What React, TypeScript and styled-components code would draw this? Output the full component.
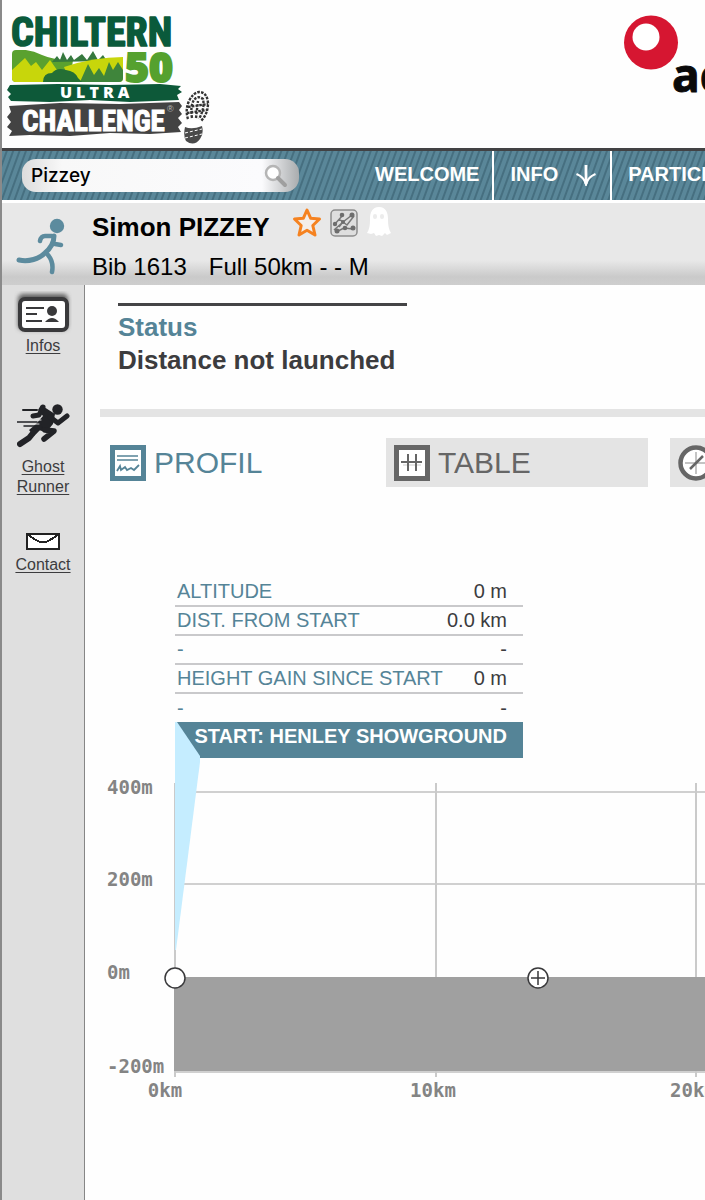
import React from "react";
import styled, { createGlobalStyle } from "styled-components";

const teal = "#558497";
const ink = "#3c3c3e";

const GlobalStyle = createGlobalStyle`
  *, *::before, *::after { box-sizing: border-box; }
  html, body { margin: 0; background: #fefefe; overflow-x: hidden; }
  body { font-family: "Liberation Sans", Arial, sans-serif; color: ${ink}; }
`;

const Page = styled.div`
  display: flex;
  flex-direction: column;
  min-height: 100vh;
  border-left: 2px solid #8a8a8a;
  overflow: hidden;
`;

const Header = styled.header`
  display: flex;
  height: 151px;
  padding: 4px 0 0 4px;
  gap: 410px;
  border-bottom: 3px solid #424244;
  svg { flex: none; display: block; }
`;

const NavBar = styled.nav`
  display: flex;
  align-items: stretch;
  height: 52px;
  padding-left: 20px;
  border-bottom: 3px solid #fff;
  background: repeating-linear-gradient(110deg, #5a8799 0 3px, #466f80 4px 5px, #5a8799 6px);
`;

const Search = styled.form`
  display: flex;
  flex: none;
  align-items: center;
  align-self: center;
  width: 277px;
  height: 33px;
  margin-right: 60px;
  padding: 0 11px 0 9px;
  border-radius: 14px;
  background: linear-gradient(90deg, #dcdcdc 0, #f8f8f8 40px, #fbfbfd 240px, #a9acae 100%);
`;

const SearchInput = styled.input`
  flex: 1;
  min-width: 0;
  padding: 0;
  border: 0;
  outline: 0;
  background: transparent;
  color: #000;
  font: 500 19px Inter, sans-serif;
`;

const PlainButton = styled.button`
  display: block;
  flex: none;
  padding: 0;
  border: 0;
  background: none;
  cursor: pointer;
  svg { display: block; }
`;

const NavLink = styled.a`
  display: flex;
  flex: none;
  align-items: center;
  gap: 17px;
  padding: 0 13px 2px 16px;
  border-right: 2px solid #fff;
  color: #fff;
  font-size: 20px;
  font-weight: 700;
  text-decoration: none;
`;

const Summary = styled.section`
  display: flex;
  height: 82px;
  padding-left: 14px;
  background: linear-gradient(#e8e8e8 0 70%, #cacaca 90%, #cecece);
  color: #000;
`;

const RunnerBadge = styled.div`
  flex: none;
  width: 76px;
  padding-top: 14px;
`;

const NameRow = styled.div`
  display: flex;
  align-items: center;
  height: 40px;
  gap: 8px;
`;

const Name = styled.h1`
  margin: 0 14px 0 0;
  padding-top: 8px;
  font-size: 26px;
  line-height: 30px;
`;

const BibRow = styled.div`
  display: flex;
  gap: 22px;
  padding-top: 10px;
  font-size: 24px;
  line-height: 28px;
`;

const Body = styled.div`
  display: flex;
  flex: 1;
`;

const Sidebar = styled.aside`
  display: flex;
  flex: none;
  flex-direction: column;
  align-items: center;
  width: 83px;
  padding-top: 6px;
  border-right: 1px solid #868686;
  background: #dfdfdf;
`;

const SideLink = styled.a<{ $after?: number }>`
  display: flex;
  flex-direction: column;
  align-items: center;
  margin-bottom: ${(p) => p.$after ?? 0}px;
  color: ${ink};
  font-size: 16px;
  line-height: 20px;
  text-align: center;
  text-underline-offset: 2px;
`;

const SideIcon = styled.span<{ $gap?: number }>`
  display: block;
  margin-bottom: ${(p) => p.$gap ?? 0}px;
  svg { display: block; }
`;

const Main = styled.main`
  flex: 1;
  min-width: 0;
  padding-top: 18px;
`;

const Status = styled.section`
  width: 289px;
  margin-left: 33px;
  padding-top: 5px;
  border-top: 3px solid #444446;
  font-size: 26px;
  font-weight: 700;
  line-height: 33px;
`;

const StatusTitle = styled.h2`
  margin: 0;
  color: ${teal};
  font: inherit;
`;

const StatusText = styled.p`
  margin: 0;
  white-space: nowrap;
`;

const Divider = styled.hr`
  height: 8px;
  margin: 32px 0 21px 15px;
  border: 0;
  background: #e4e4e4;
`;

const Tabs = styled.div`
  display: flex;
  gap: 22px;
  padding-left: 17px;
`;

const Tab = styled.button<{ $active?: boolean }>`
  display: flex;
  flex: none;
  align-items: center;
  gap: 8px;
  width: 262px;
  height: 49px;
  padding: 0 8px;
  border: 0;
  background: ${(p) => (p.$active ? "transparent" : "#e4e4e4")};
  color: ${(p) => (p.$active ? teal : "#666")};
  font: 30px "Liberation Sans", Arial, sans-serif;
  cursor: pointer;
  svg { flex: none; }
`;

const Profile = styled.section`
  position: relative;
  padding-top: 90px;
`;

const Callout = styled.div`
  width: 348px;
  margin-left: 90px;
`;

const Facts = styled.table`
  width: 100%;
  border-collapse: collapse;
  font-size: 20px;
  line-height: 27px;
  tr + tr { border-top: 2px solid #c9c9cb; }
  th, td { height: 29px; padding: 0; white-space: nowrap; }
  th { padding-left: 2px; color: ${teal}; font-weight: 400; text-align: left; }
  td { padding-right: 16px; text-align: right; }
`;

const Place = styled.h3`
  height: 36px;
  margin: 0;
  padding: 0 16px 0 0;
  background: ${teal};
  color: #fff;
  font-size: 20px;
  line-height: 28px;
  text-align: right;
  white-space: nowrap;
`;

const Pointer = styled.svg`
  position: absolute;
  top: 235px;
  left: 90px;
  z-index: 1;
  pointer-events: none;
`;

const Chart = styled.svg`
  display: block;
  width: 100%;
  height: 350px;
  text {
    fill: #848484;
    font: 700 19px "DejaVu Sans Mono", monospace;
  }
`;

function EventLogo() {
  return (
    <svg width="208" height="142" viewBox="6 4 208 142" role="img" aria-label="Chiltern 50 Ultra Challenge">
      <text x="11" y="46" fill="#0a5a3b" stroke="#0a5a3b" strokeWidth="1.5" strokeLinejoin="round" fontFamily='"Roboto Condensed", "Liberation Sans Narrow", "Liberation Sans", sans-serif' fontWeight="700" fontSize="40">CHILTERN</text>
      <clipPath id="hills"><rect x="12" y="50" width="111" height="32" rx="4" /></clipPath>
      <g clipPath="url(#hills)">
        <path d="M12 50Q28 48 42 55Q56 61 73 60L72 67 40 82H12z" fill="#5aa12f" />
        <path d="M52 62L57 56 60 60 63 52 67 60 71 55 74 60 82 54 87 60 93 51 98 60 103 55 107 61z" fill="#35783e" />
        <path d="M64 67Q94 57 123 57V82H70z" fill="#c8d60b" />
        <path d="M12 70L25 58 31 66 36 62 42 70 50 60 57 70 72 71 78 82H12z" fill="#c8d60b" />
        <path d="M80 82L88 64 94 75 99 68 104 76 109 62 113 70 118 62 123 70V82z" fill="#3f853b" />
        <path d="M43 82Q43 73 52 73Q57 67 66 70Q75 71 78 78L82 82z" fill="#246f35" />
      </g>
      <text x="125" y="82" fill="#55a12e" stroke="#55a12e" strokeWidth="2" fontFamily='"Open Sans", "Liberation Sans", sans-serif' fontWeight="800" fontSize="41">50</text>
      <path d="M10 85L58 84 110 85 160 84 181 86 178 89 182 92 177 95 179 100 130 102 90 100 50 102 11 101 8 97 11 94 7 90z" fill="#0d5939" />
      <text x="60" y="98" fill="#fff" fontFamily='"Open Sans", sans-serif' fontWeight="800" fontSize="16" letterSpacing="4">ULTRA</text>
      <path d="M9 106L60 103 120 104 179 102 182 106 179 110 182 114 178 118 182 123 178 127 181 132 150 134 110 133 70 136 30 135 9 136 12 131 7 127 11 122 7 117 11 112z" fill="#434343" />
      <text x="22" y="131" fill="#fff" stroke="#fff" strokeWidth="1" fontFamily='"Roboto Condensed", "Liberation Sans Narrow", "Liberation Sans", sans-serif' fontWeight="700" fontSize="29">CHALLENGE</text>
      <text x="167" y="112" fill="#bbb" fontSize="9">®</text>
      <g fill="none" stroke="#333" strokeWidth="2.4" strokeDasharray="2.6 1.2">
        <path d="M188 119Q185 110 189 101Q193 93 199 92Q207 92 208 103Q208 114 201 121" />
        <path d="M192 118Q190 106 194 100Q198 95 203 99Q205 108 199 119" />
        <path d="M196 118L198 101M187 113L207 110M188 107L208 104" />
      </g>
      <path d="M185 127Q192 130 202 126Q204 134 200 139Q194 147 186 141Q183 136 185 127z" fill="#4a4a4a" />
      <path d="M185 133L202 129M185 138L202 134" stroke="#fff" strokeDasharray="3 2" />
    </svg>
  );
}

function SponsorLogo() {
  return (
    <svg width="140" height="110" viewBox="624 4 140 110" role="img" aria-label="Sponsor">
      <circle cx="651" cy="42.500" r="27" fill="#d61631" />
      <circle cx="646" cy="37" r="13.500" fill="#fff" />
      <text x="672" y="92" fill="#0a0a0a" stroke="#0a0a0a" strokeWidth="1" fontFamily='"Open Sans", sans-serif' fontWeight="700" fontSize="46">ac</text>
    </svg>
  );
}

function SearchIcon() {
  return (
    <svg width="24" height="24" viewBox="0 0 24 24" fill="none">
      <circle cx="9" cy="9" r="7" fill="#fff" stroke="#b5b5b5" strokeWidth="2.500" />
      <path d="M14 14L21 21" stroke="#9f9f9f" strokeWidth="4" strokeLinecap="round" />
    </svg>
  );
}

function ArrowDown() {
  return (
    <svg width="22" height="22" viewBox="0 0 22 22" fill="none" stroke="#fff">
      <path d="M11 1V20" strokeWidth="2.800" />
      <path d="M1.500 10Q9 13 11 20Q13 13 20.500 10" strokeWidth="2.400" />
    </svg>
  );
}

function TealRunner() {
  return (
    <svg width="50" height="60" viewBox="0 0 50 60" fill="none" stroke="#5c8b9e" strokeWidth="5" strokeLinecap="round">
      <circle cx="41" cy="9" r="7.200" fill="#5c8b9e" stroke="none" />
      <path d="M3 43C13 45 23 42 29 36C36 30 38 25 38 19" />
      <path d="M36 19H29Q25 19 24 24M39 27L45 28M32 38Q38 45 36 55" strokeWidth="4.500" />
    </svg>
  );
}

function StarIcon() {
  return (
    <svg width="30" height="30" viewBox="0 0 30 30">
      <path d="M15 2L18.600 10.200 27.500 11 20.800 17.500 23 27 15 22.300 7 27 9.200 17.500 2.500 11 11.400 10.200z" fill="#f4eeea" stroke="#f58220" strokeWidth="3" strokeLinejoin="round" />
    </svg>
  );
}

function ShareIcon() {
  return (
    <svg width="28" height="28" viewBox="0 0 28 28" stroke="#777" strokeWidth="1.500">
      <rect x="1" y="1" width="26" height="26" rx="4" fill="#dedede" stroke="#8d8d8d" />
      <path d="M4 16L13 6M4 21L13 13 22 6M6 23L14 19 23 20M13 13L17 16 24 7M9 10L13 13 9 18" fill="none" />
      <g fill="#6d6d6d" stroke="none">
        <circle cx="12" cy="6" r="2.300" /><circle cx="22" cy="6" r="2.500" /><circle cx="5" cy="15" r="2.200" />
        <circle cx="13" cy="13" r="2" /><circle cx="7" cy="22" r="2.500" /><circle cx="15" cy="19" r="2.300" /><circle cx="23" cy="19" r="2.500" />
      </g>
    </svg>
  );
}

function GhostIcon() {
  return (
    <svg width="26" height="32" viewBox="0 0 26 32">
      <path d="M13 0C6 0 4 6 4 12C4 19 3 23 1 26L5 27 8 26 10 29 13 28 16 29 19 26 21 28 25 26C23 23 22 19 22 12C22 6 20 0 13 0z" fill="#fff" />
      <path d="M9 9V10M16 9V10" stroke="#ececec" strokeWidth="4" strokeLinecap="round" />
    </svg>
  );
}

function CardIcon() {
  return (
    <svg width="58" height="46" viewBox="0 0 58 46">
      <defs>
        <filter id="soft" x="-20%" y="-20%" width="140%" height="140%"><feGaussianBlur stdDeviation="2" /></filter>
      </defs>
      <rect x="4" y="3" width="50" height="36" rx="5" fill="#5f5f5f" filter="url(#soft)" />
      <rect x="6" y="8" width="47" height="31" rx="5" fill="#fff" stroke="#39393b" strokeWidth="4" />
      <path d="M12 17H30M12 23H23M12 30H28" stroke="#39393b" strokeWidth="2" />
      <circle cx="38" cy="20" r="5" fill="#39393b" />
      <path d="M31 31Q38 23 45 31z" fill="#39393b" />
    </svg>
  );
}

function SprinterIcon() {
  return (
    <svg width="53" height="44" viewBox="0 0 53 44" fill="none" stroke="#222327" strokeLinecap="round" strokeLinejoin="round">
      <circle cx="40.500" cy="5.500" r="5.200" fill="#222327" stroke="none" />
      <path d="M24 1L38 10 36 20 31 26 39 26 36 31 22 26 17 32 12 26 19 20 26 12 21 6z" fill="#222327" stroke="none" />
      <path d="M33 13L41 19 50 12" strokeWidth="5" />
      <path d="M26 3L22 11 16 12" strokeWidth="5" />
      <path d="M22 23L16 29 12 34 3 40" strokeWidth="6" />
      <path d="M28 26L37 27 27 35" strokeWidth="5.500" />
      <path d="M6 6H20" strokeWidth="2" />
      <path d="M0 18L20 18M7 22H20" strokeWidth="1.500" />
      <path d="M12 16H24M14 20H22" stroke="#dfdfdf" strokeWidth="1" />
    </svg>
  );
}

function EnvelopeIcon() {
  return (
    <svg width="34" height="17" viewBox="0 0 34 17" shapeRendering="crispEdges">
      <rect x="1" y="1" width="32" height="15" fill="#fff" stroke="#222" strokeWidth="1.500" />
      <path d="M2 2L10 7 14 9H20L24 7 32 2" fill="none" stroke="#222" strokeWidth="2" />
    </svg>
  );
}

function ProfileIcon() {
  return (
    <svg width="36" height="36" viewBox="0 0 36 36" fill="none" stroke="#558497">
      <rect x="2.500" y="2.500" width="31" height="31" fill="#fff" strokeWidth="5" />
      <path d="M7 11H28M7 15H28" strokeWidth="1.500" />
      <path d="M7 26L10 21 11 25 15 22 17 25 21 23 24 25 29 20" strokeWidth="1.800" />
    </svg>
  );
}

function TableIcon() {
  return (
    <svg width="36" height="36" viewBox="0 0 36 36" fill="none" stroke="#666">
      <rect x="2.500" y="2.500" width="31" height="31" fill="#fff" strokeWidth="5" />
      <path d="M9 20H27" stroke="#ccc" strokeWidth="1" />
      <path d="M14 9V26M22 9V26M7 17H28" strokeWidth="2" />
    </svg>
  );
}

function CompassIcon() {
  return (
    <svg width="36" height="36" viewBox="0 0 36 36" fill="none" stroke="#666">
      <circle cx="18" cy="18" r="15.500" fill="#fff" strokeWidth="4.500" />
      <path d="M18 7V29M7 18H29" stroke="#c4c4c4" strokeWidth="2" />
      <path d="M12 24L25 11" strokeWidth="2.500" />
    </svg>
  );
}

const facts = [
  ["ALTITUDE", "0 m"],
  ["DIST. FROM START", "0.0 km"],
  ["-", "-"],
  ["HEIGHT GAIN SINCE START", "0 m"],
  ["-", "-"],
];

const heights = [
  { label: "400m", line: 34, text: 36 },
  { label: "200m", line: 126, text: 128 },
  { label: "0m", line: 220, text: 221 },
  { label: "-200m", line: 314, text: 315 },
];

const kilometres = [0, 10, 20, 30, 40, 50];
const kmX = (km: number) => 90 + km * 26 + (km ? 1 : 0);

function ElevationChart() {
  return (
    <Chart role="img" aria-label="Elevation profile">
      {heights.map((h) => (
        <g key={h.label}>
          <line x1="89" x2="100%" y1={h.line} y2={h.line} stroke="#d0d0d0" strokeWidth="2" />
          <text x="22" y={h.text}>{h.label}</text>
        </g>
      ))}
      {kilometres.map((km) => (
        <g key={km}>
          <line x1={kmX(km)} x2={kmX(km)} y1="25" y2="319" stroke="#cacaca" strokeWidth="2" />
          <text x={kmX(km) - (km ? 3 : 10)} y="339" textAnchor="middle">{km}km</text>
        </g>
      ))}
      <rect x="89" y="219" width="100%" height="94" fill="#a0a0a0" />
      <g fill="#fff" stroke="#39393b" strokeWidth="1.500">
        <circle cx="90" cy="220" r="10" />
        <circle cx="453" cy="220" r="10" />
        <path d="M446 220H460M453 213V227" />
      </g>
    </Chart>
  );
}

export default function App() {
  return (
    <>
      <GlobalStyle />
      <Page>
        <Header>
          <EventLogo />
          <SponsorLogo />
        </Header>
        <NavBar>
          <Search onSubmit={(e) => e.preventDefault()}>
            <SearchInput type="text" aria-label="Search participant" defaultValue="Pizzey" />
            <PlainButton type="submit" aria-label="Search"><SearchIcon /></PlainButton>
          </Search>
          <NavLink href="#welcome">WELCOME</NavLink>
          <NavLink href="#info">INFO<ArrowDown /></NavLink>
          <NavLink href="#participants">PARTICIPANTS</NavLink>
        </NavBar>
        <Summary>
          <RunnerBadge><TealRunner /></RunnerBadge>
          <div>
            <NameRow>
              <Name>Simon PIZZEY</Name>
              <PlainButton type="button" aria-label="Favourite"><StarIcon /></PlainButton>
              <PlainButton type="button" aria-label="Share"><ShareIcon /></PlainButton>
              <PlainButton type="button" aria-label="Ghost"><GhostIcon /></PlainButton>
            </NameRow>
            <BibRow><span>Bib 1613</span><span>Full 50km - - M</span></BibRow>
          </div>
        </Summary>
        <Body>
          <Sidebar>
            <SideLink href="#infos" $after={48}>
              <SideIcon $gap={-1}><CardIcon /></SideIcon>
              Infos
            </SideLink>
            <SideLink href="#ghost" $after={36}>
              <SideIcon $gap={9}><SprinterIcon /></SideIcon>
              <span>Ghost<br />Runner</span>
            </SideLink>
            <SideLink href="#contact">
              <SideIcon $gap={5}><EnvelopeIcon /></SideIcon>
              Contact
            </SideLink>
          </Sidebar>
          <Main>
            <Status>
              <StatusTitle>Status</StatusTitle>
              <StatusText>Distance not launched</StatusText>
            </Status>
            <Divider />
            <Tabs>
              <Tab type="button" $active><ProfileIcon />PROFIL</Tab>
              <Tab type="button"><TableIcon />TABLE</Tab>
              <Tab type="button" aria-label="Compass"><CompassIcon /></Tab>
            </Tabs>
            <Profile>
              <Callout>
                <Facts>
                  <tbody>
                    {facts.map(([label, value], i) => (
                      <tr key={i}><th scope="row">{label}</th><td>{value}</td></tr>
                    ))}
                  </tbody>
                </Facts>
                <Place>START: HENLEY SHOWGROUND</Place>
              </Callout>
              <Pointer width="26" height="230" viewBox="0 0 26 230">
                <path d="M0 0H2L25 34V40L1 228H0z" fill="#c5edff" />
              </Pointer>
              <ElevationChart />
            </Profile>
          </Main>
        </Body>
      </Page>
    </>
  );
}
